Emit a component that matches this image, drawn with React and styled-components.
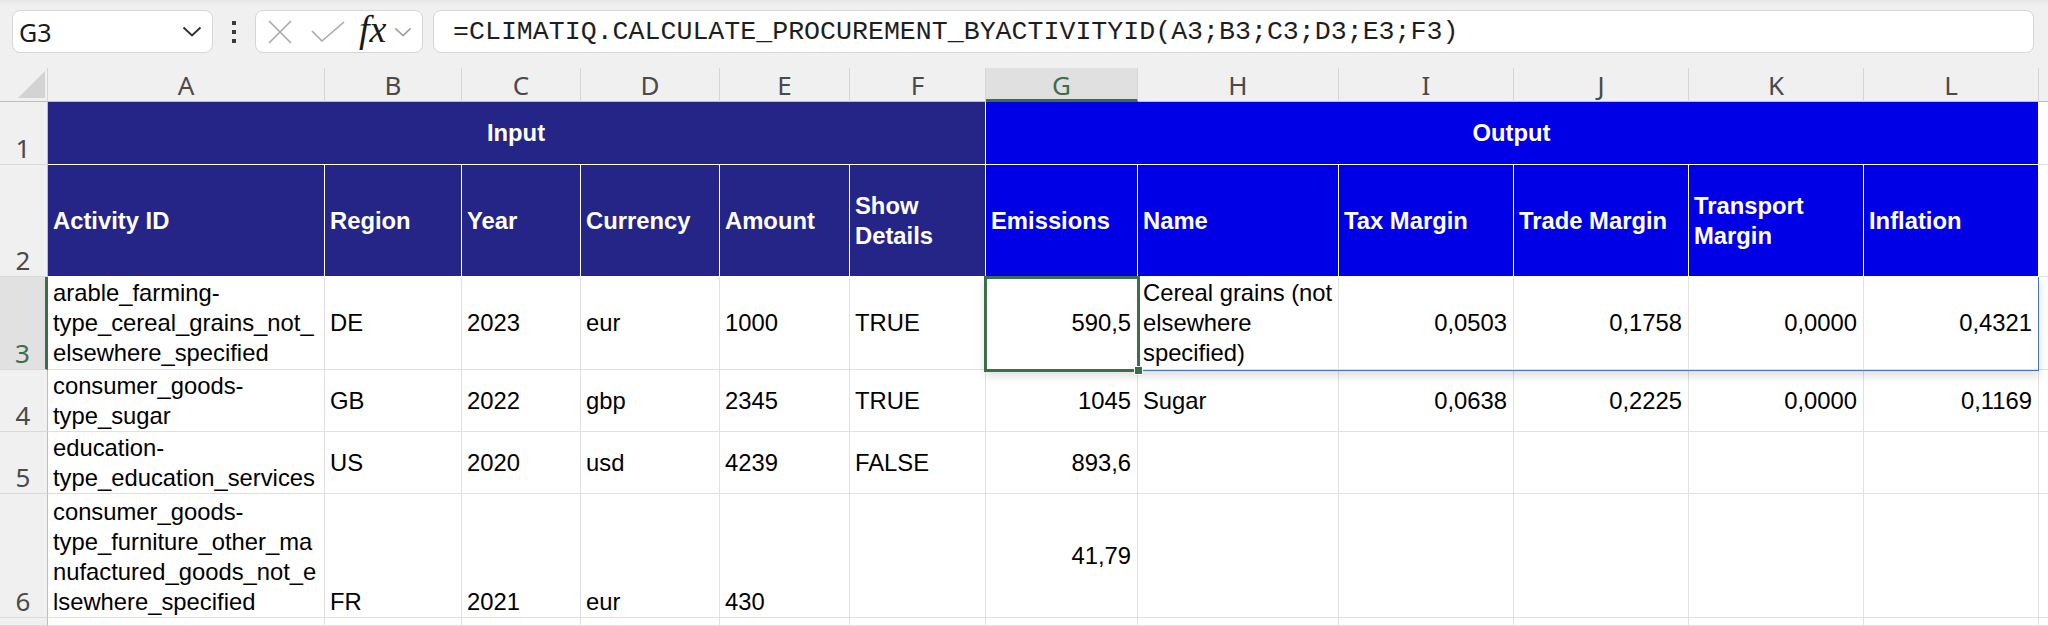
import React from 'react'
import styled, { createGlobalStyle } from 'styled-components'

const GlobalStyle = createGlobalStyle`
  html, body {
    margin: 0;
    padding: 0;
    background: #ffffff;
  }
  body {
    font-family: "Liberation Sans", Arial, sans-serif;
    overflow: hidden;
  }
`

// column widths in px (row header + A..L), M takes the rest
const COLS = [48, 277, 137, 119, 139, 130, 136, 152, 201, 175, 175, 175, 175]
const LETTERS = ['A', 'B', 'C', 'D', 'E', 'F', 'G', 'H', 'I', 'J', 'K', 'L', 'M']
const ROWS = [34, 63, 112, 93, 62, 62, 124]

const GREEN = '#3c6e4a'
const NAVY = '#252587'
const BLUE = '#0000e6'

const headers = [
  'Activity ID', 'Region', 'Year', 'Currency', 'Amount', 'Show\nDetails',
  'Emissions', 'Name', 'Tax Margin', 'Trade Margin', 'Transport\nMargin', 'Inflation'
]

// each value: [text, align, valign]
const data = [
  [
    ['arable_farming-\ntype_cereal_grains_not_\nelsewhere_specified'], ['DE'], ['2023'], ['eur'], ['1000'], ['TRUE'],
    ['590,5', 'right'], ['Cereal grains (not\nelsewhere\nspecified)'],
    ['0,0503', 'right'], ['0,1758', 'right'], ['0,0000', 'right'], ['0,4321', 'right']
  ],
  [
    ['consumer_goods-\ntype_sugar'], ['GB'], ['2022'], ['gbp'], ['2345'], ['TRUE'],
    ['1045', 'right'], ['Sugar'],
    ['0,0638', 'right'], ['0,2225', 'right'], ['0,0000', 'right'], ['0,1169', 'right']
  ],
  [
    ['education-\ntype_education_services'], ['US'], ['2020'], ['usd'], ['4239'], ['FALSE'],
    ['893,6', 'right'], [''], [''], [''], [''], ['']
  ],
  [
    ['consumer_goods-\ntype_furniture_other_ma\nnufactured_goods_not_e\nlsewhere_specified', 'left', 'bottom'],
    ['FR', 'left', 'bottom'], ['2021', 'left', 'bottom'], ['eur', 'left', 'bottom'], ['430', 'left', 'bottom'], ['', 'left', 'bottom'],
    ['41,79', 'right'], [''], [''], [''], [''], ['']
  ]
]

/* ---------- toolbar ---------- */

const Toolbar = styled.div`
  height: 68px;
  box-sizing: border-box;
  padding: 10px 14px 0 12px;
  display: flex;
  align-items: flex-start;
  background: linear-gradient(#e6e6e6 0, #f0f0f0 6px, #f0f0f0 100%);
`

const Box = styled.div`
  height: 43px;
  box-sizing: border-box;
  background: #ffffff;
  border: 1px solid #d6d6d6;
  border-radius: 8px;
  display: flex;
  align-items: center;
`

const NameBox = styled(Box)`
  width: 201px;
  justify-content: space-between;
  padding: 0 10px 0 6px;
  font-family: "Noto Sans", "Open Sans", sans-serif;
  font-size: 25px;
  color: #1a1a1a;
`

const Dots = styled.div`
  width: 42px;
  height: 43px;
  display: flex;
  flex-direction: column;
  align-items: center;
  justify-content: center;
  gap: 5px;

  span {
    width: 4px;
    height: 4px;
    background: #3a3a3a;
  }
`

const IconBox = styled(Box)`
  width: 168px;
  padding-left: 11px;
  gap: 0;
`

const Fx = styled.span`
  font-family: "Liberation Serif", "Times New Roman", serif;
  font-style: italic;
  font-size: 38px;
  line-height: 1;
  color: #1a1a1a;
  margin: -5px 8px 0 14px;
`

const FormulaBox = styled(Box)`
  flex: 1;
  margin-left: 10px;
  padding-left: 19px;
  font-family: "Liberation Mono", "Courier New", monospace;
  font-size: 26.6px;
  color: #1e1e1e;
  white-space: nowrap;
`

/* ---------- sheet ---------- */

const Sheet = styled.div`
  display: grid;
  grid-template-columns: ${COLS.map(c => c + 'px').join(' ')} 1fr;
  grid-template-rows: ${ROWS.map(r => r + 'px').join(' ')} 1fr;
  height: 558px;
  background: #ffffff;
`

const Corner = styled.div`
  grid-column: 1;
  grid-row: 1;
  background: #f0f0f0;
  border-bottom: 1px solid #bdbdbd;
  border-right: 1px solid #d6d6d6;
  display: flex;
  align-items: flex-end;
  justify-content: flex-end;
  padding: 0 2px 3px 0;
  box-sizing: border-box;
`

const ColHead = styled.div`
  grid-column: ${p => p.$col};
  grid-row: 1;
  box-sizing: border-box;
  background: ${p => (p.$selected ? '#e0e0e0' : '#f0f0f0')};
  border-right: 1px solid #d6d6d6;
  border-bottom: ${p => (p.$selected ? `3px solid ${GREEN}` : '1px solid #bdbdbd')};
  color: ${p => (p.$selected ? GREEN : '#4a4a4a')};
  font-family: "Noto Sans", "Open Sans", sans-serif;
  font-size: 26px;
  line-height: 1;
  display: flex;
  align-items: center;
  justify-content: center;
  padding-top: ${p => (p.$selected ? '3px' : '1px')};
`

const RowHead = styled.div`
  grid-column: 1;
  grid-row: ${p => p.$row};
  box-sizing: border-box;
  background: ${p => (p.$selected ? '#e1e1e1' : '#f0f0f0')};
  border-bottom: 1px solid #d9d9d9;
  border-right: ${p => (p.$selected ? `3px solid ${GREEN}` : '1px solid #bdbdbd')};
  color: ${p => (p.$selected ? GREEN : '#4a4a4a')};
  font-family: "Noto Sans", "Open Sans", sans-serif;
  font-size: 26px;
  line-height: 1.2;
  display: flex;
  align-items: flex-end;
  justify-content: center;
  padding: 0 ${p => (p.$selected ? '0' : '1px')} 0 0;
`

const Cell = styled.div`
  grid-column: ${p => p.$col} / span ${p => p.$span || 1};
  grid-row: ${p => p.$row};
  box-sizing: border-box;
  min-width: 0;
  overflow: hidden;
  padding: 0 6px 0 5px;
  border-right: 1px solid ${p => (p.$bg ? '#ffffff' : '#e1e1e1')};
  border-bottom: 1px solid ${p => (p.$bg ? '#ffffff' : '#e1e1e1')};
  background: ${p => p.$bg || '#ffffff'};
  color: ${p => (p.$bg ? '#ffffff' : '#000000')};
  font-weight: ${p => (p.$bold ? 700 : 400)};
  font-size: 23.8px;
  line-height: 30px;
  white-space: pre;
  display: flex;
  align-items: ${p => (p.$valign === 'bottom' ? 'flex-end' : 'center')};
  justify-content: ${p =>
    p.$align === 'right' ? 'flex-end' : p.$align === 'center' ? 'center' : 'flex-start'};
  text-align: ${p => p.$align || 'left'};
`

const SpillFrame = styled.div`
  grid-column: 8 / 14;
  grid-row: 4;
  margin: 0 0 -1px -1px;
  border: 1.5px solid #4472c4;
  border-top: none;
  box-shadow: 0 5px 9px rgba(0, 0, 0, 0.13);
  z-index: 1;
  pointer-events: none;
`

const Selection = styled.div`
  grid-column: 8;
  grid-row: 4;
  margin: -1px -2px -2px -2px;
  border: 3px solid ${GREEN};
  position: relative;
  z-index: 2;
  pointer-events: none;
`

const Handle = styled.span`
  position: absolute;
  right: -6px;
  bottom: -6px;
  width: 7px;
  height: 7px;
  background: ${GREEN};
  border: 1px solid #ffffff;
`

const Chevron = ({ color = '#333', w = 20, h = 11, sw = 2 }) => (
  <svg width={w} height={h} viewBox='0 0 20 11'>
    <path d='M1.5 1.5 L10 9.5 L18.5 1.5' fill='none' stroke={color} strokeWidth={sw} />
  </svg>
)

const App = () => {
  return (
    <>
      <GlobalStyle />
      <Toolbar>
        <NameBox>
          <span>G3</span>
          <Chevron />
        </NameBox>
        <Dots>
          <span />
          <span />
          <span />
        </Dots>
        <IconBox>
          <svg width='26' height='24' viewBox='0 0 26 24'>
            <path d='M2 1 L24 23 M24 1 L2 23' stroke='#a8a8a8' strokeWidth='1.6' fill='none' />
          </svg>
          <svg width='34' height='22' viewBox='0 0 34 22' style={{ marginLeft: 18 }}>
            <path d='M1 10 L11 20 L33 1' stroke='#a8a8a8' strokeWidth='1.6' fill='none' />
          </svg>
          <Fx>fx</Fx>
          <Chevron color='#a0a0a0' w={18} h={10} sw={1.8} />
        </IconBox>
        <FormulaBox>=CLIMATIQ.CALCULATE_PROCUREMENT_BYACTIVITYID(A3;B3;C3;D3;E3;F3)</FormulaBox>
      </Toolbar>

      <Sheet>
        <Corner>
          <svg width='27' height='27' viewBox='0 0 27 27'>
            <polygon points='27,0 27,27 0,27' fill='#d3d3d3' />
          </svg>
        </Corner>
        {LETTERS.map((l, i) => (
          <ColHead key={l} $col={i + 2} $selected={l === 'G'}>
            {l === 'M' ? '' : l}
          </ColHead>
        ))}

        {[1, 2, 3, 4, 5, 6, 7].map(n => (
          <RowHead key={n} $row={n + 1} $selected={n === 3}>
            {n === 7 ? '' : n}
          </RowHead>
        ))}

        <Cell $row={2} $col={2} $span={6} $bg={NAVY} $bold $align='center'>Input</Cell>
        <Cell $row={2} $col={8} $span={6} $bg={BLUE} $bold $align='center'>Output</Cell>
        <Cell $row={2} $col={14} />

        {headers.map((h, i) => (
          <Cell key={h} $row={3} $col={i + 2} $bg={i < 6 ? NAVY : BLUE} $bold>
            {h}
          </Cell>
        ))}
        <Cell $row={3} $col={14} />

        {data.map((row, r) => (
          <React.Fragment key={r}>
            {row.map(([text, align, valign], c) => (
              <Cell key={c} $row={r + 4} $col={c + 2} $align={align} $valign={valign}>
                {text}
              </Cell>
            ))}
            <Cell $row={r + 4} $col={14} />
          </React.Fragment>
        ))}

        {LETTERS.map((l, i) => (
          <Cell key={'r8' + l} $row={8} $col={i + 2} />
        ))}

        <SpillFrame />
        <Selection>
          <Handle />
        </Selection>
      </Sheet>
    </>
  )
}

export default App
